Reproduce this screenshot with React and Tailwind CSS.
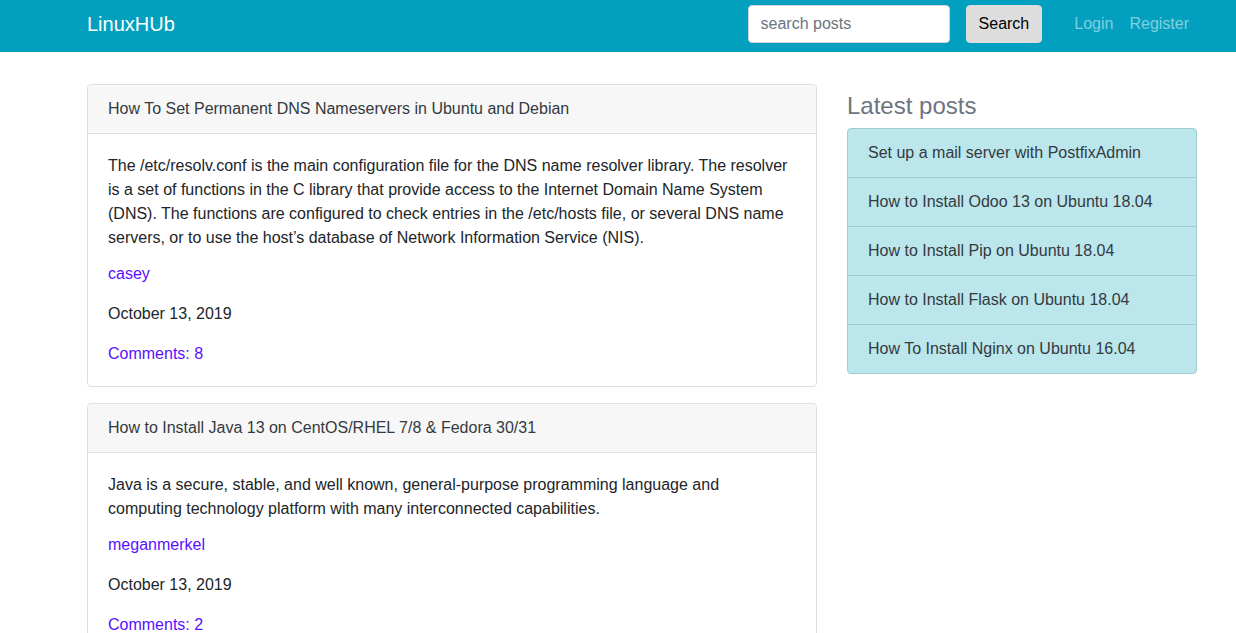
const posts = [
  {
    title: 'How To Set Permanent DNS Nameservers in Ubuntu and Debian',
    body: 'The /etc/resolv.conf is the main configuration file for the DNS name resolver library. The resolver is a set of functions in the C library that provide access to the Internet Domain Name System (DNS). The functions are configured to check entries in the /etc/hosts file, or several DNS name servers, or to use the host’s database of Network Information Service (NIS).',
    author: 'casey',
    date: 'October 13, 2019',
    comments: 8,
  },
  {
    title: 'How to Install Java 13 on CentOS/RHEL 7/8 & Fedora 30/31',
    body: 'Java is a secure, stable, and well known, general-purpose programming language and computing technology platform with many interconnected capabilities.',
    author: 'meganmerkel',
    date: 'October 13, 2019',
    comments: 2,
  },
];

const latest = [
  'Set up a mail server with PostfixAdmin',
  'How to Install Odoo 13 on Ubuntu 18.04',
  'How to Install Pip on Ubuntu 18.04',
  'How to Install Flask on Ubuntu 18.04',
  'How To Install Nginx on Ubuntu 16.04',
];

function Navbar() {
  return (
    <header className="bg-[#02a0be] pt-[5px] pb-[9px] pl-12">
      <nav className="mx-auto flex max-w-[1110px] items-center">
        <a href="#" className="text-xl text-white">LinuxHUb</a>
        <form className="ml-auto flex gap-4" onSubmit={(e) => e.preventDefault()}>
          <input
            type="search"
            aria-label="search posts"
            placeholder="search posts"
            className="h-[38px] w-[202px] rounded border border-[#ced4da] bg-white px-3 text-[#495057] placeholder:text-[#6c757d]"
          />
          <button type="submit" className="h-[38px] rounded border border-[#dddddd] bg-[#dddddd] px-3 text-black">
            Search
          </button>
        </form>
        <div className="ml-6 flex text-white/50">
          <a href="#" className="px-2">Login</a>
          <a href="#" className="px-2">Register</a>
        </div>
      </nav>
    </header>
  );
}

function PostCard({ post }) {
  return (
    <article className="rounded border border-[#dfdfdf] bg-white">
      <h2 className="rounded-t border-b border-[#dfdfdf] bg-[#f7f7f7] px-5 py-3">
        <a href="#" className="text-[#343a40]">{post.title}</a>
      </h2>
      <div className="p-5">
        <p className="mb-3">{post.body}</p>
        <div className="flex flex-col items-start gap-4">
          <a href="#" className="text-[#5a0fff]">{post.author}</a>
          <p>{post.date}</p>
          <a href="#" className="text-[#5a0fff]">Comments: {post.comments}</a>
        </div>
      </div>
    </article>
  );
}

function LatestPosts() {
  return (
    <aside>
      <h2 className="my-2 text-2xl leading-7 text-[#6c757d]">Latest posts</h2>
      <ul className="divide-y divide-[#a2cbd1] rounded border border-[#a2cbd1] bg-[#bbe6ec]">
        {latest.map((title) => (
          <li key={title} className="px-5 py-3">
            <a href="#" className="text-[#343a40]">{title}</a>
          </li>
        ))}
      </ul>
    </aside>
  );
}

export default function App() {
  return (
    <div className="min-h-screen bg-white font-['Liberation_Sans',Arial,sans-serif] text-base text-[#212529]">
      <Navbar />
      <div className="py-8 pl-12">
        <div className="mx-auto grid max-w-[1110px] grid-cols-[minmax(0,1fr)_350px] items-start gap-[30px]">
          <main className="flex flex-col gap-4">
            {posts.map((post) => (
              <PostCard key={post.title} post={post} />
            ))}
          </main>
          <LatestPosts />
        </div>
      </div>
    </div>
  );
}
